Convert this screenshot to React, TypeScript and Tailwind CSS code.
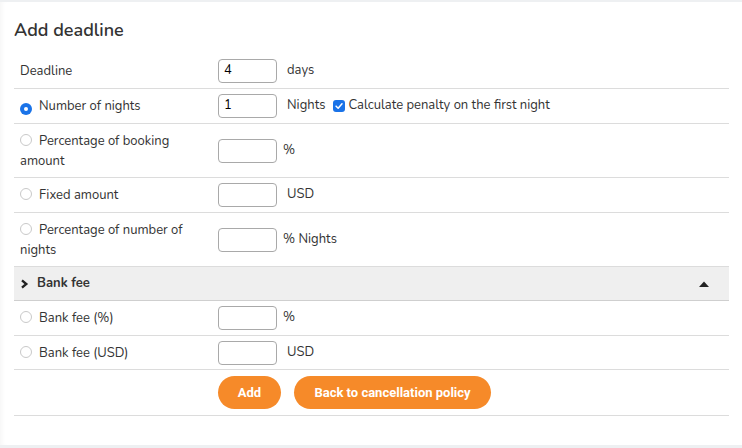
import React from "react";

type Row = {
  label: React.ReactNode;
  radio?: "on" | "off";
  value?: string;
  unit: string;
  unitGap: string;
  extra?: boolean;
  tall?: boolean;
};

function Radio({ on }: { on?: boolean }) {
  if (on) {
    return (
      <span className="mr-[7px] inline-flex h-[12px] w-[12px] translate-y-[1px] items-center justify-center rounded-full bg-[#1a73e8]">
        <span className="h-[4px] w-[4px] rounded-full bg-white" />
      </span>
    );
  }
  return <span className="mr-[7px] inline-block h-[12px] w-[12px] translate-y-[1px] rounded-full border border-[#c9c9c9] bg-white" />;
}

function Field({ value }: { value?: string }) {
  return (
    <div className="flex h-[24px] w-[59px] items-center rounded-[4px] border border-[#a9a9a9] bg-white pl-[5px] text-[13px] text-black">
      {value}
    </div>
  );
}

const rows: Row[] = [
  { label: "Deadline", value: "4", unit: "days", unitGap: "ml-[10px]" },
  { label: "Number of nights", radio: "on", value: "1", unit: "Nights", unitGap: "ml-[10px]", extra: true },
  {
    label: (
      <>
        Percentage of booking
        <br />
        amount
      </>
    ),
    radio: "off",
    unit: "%",
    unitGap: "ml-[6px]",
    tall: true,
  },
  { label: "Fixed amount", radio: "off", unit: "USD", unitGap: "ml-[10px]" },
  {
    label: (
      <>
        Percentage of number of
        <br />
        nights
      </>
    ),
    radio: "off",
    unit: "% Nights",
    unitGap: "ml-[6px]",
    tall: true,
  },
];

const bankRows: Row[] = [
  { label: "Bank fee (%)", radio: "off", unit: "%", unitGap: "ml-[6px]" },
  { label: "Bank fee (USD)", radio: "off", unit: "USD", unitGap: "ml-[10px]", tall: true },
];

function FormRow({ row }: { row: Row }) {
  return (
    <div className="flex items-center border-b border-[#dcdcdc]">
      <div className={row.tall ? "w-[194px] px-[6px] pt-[7px] pb-[6px] leading-[20px]" : "w-[194px] px-[6px] py-[7px] leading-[20px]"}>
        {row.radio && <Radio on={row.radio === "on"} />}
        {row.label}
      </div>
      <div className="flex items-center pl-[10px]">
        <Field value={row.value} />
        <span className={row.unitGap}>{row.unit}</span>
        {row.extra && (
          <span className="ml-[8px] flex items-center">
            <span className="mr-[3px] flex h-[12px] w-[12px] items-center justify-center rounded-[3px] bg-[#1a73e8]">
              <svg viewBox="0 0 12 12" className="h-[10px] w-[10px]">
                <path d="M2.5 6.2 L5 8.6 L9.6 3.4" fill="none" stroke="white" strokeWidth="1.8" strokeLinecap="round" strokeLinejoin="round" />
              </svg>
            </span>
            Calculate penalty on the first night
          </span>
        )}
      </div>
    </div>
  );
}

export default function App() {
  return (
    <div className="h-[448px] w-[742px] overflow-hidden bg-[#eef0f2] pt-[2px] font-['Nunito','Lato',sans-serif] text-[13px] text-[#333]">
      <div className="h-[443px] bg-white px-[14px] pr-[13px] shadow-[inset_5px_0_5px_-3px_rgba(0,0,0,0.04)]">
        <h2 className="pt-[16px] text-[18px] font-semibold leading-[24px] text-[#333]">Add deadline</h2>
        <div className="mt-[12px]">
          {rows.map((r, i) => (
            <FormRow key={i} row={r} />
          ))}
          <div className="flex items-center justify-between border-b border-[#cfcfcf] bg-[#efefef] px-[6px] py-[7px] leading-[19px]">
            <span className="flex items-center font-bold">
              <svg viewBox="0 0 10 10" className="mr-[8px] h-[10px] w-[9px]">
                <path d="M2.2 1 L7 5 L2.2 9" fill="none" stroke="#222" strokeWidth="2.6" />
              </svg>
              Bank fee
            </span>
            <svg viewBox="0 0 10 6" className="mr-[14px] h-[6px] w-[10px]">
              <path d="M0 6 L5 0.5 L10 6 Z" fill="#222" />
            </svg>
          </div>
          {bankRows.map((r, i) => (
            <FormRow key={i} row={r} />
          ))}
          <div className="flex items-center gap-[13px] border-b border-[#dcdcdc] pt-[6px] pb-[6px] pl-[204px]">
            <button className="h-[33px] w-[63px] rounded-full bg-[#f68a29] font-['Roboto',sans-serif] text-[13px] font-bold text-white">
              Add
            </button>
            <button className="h-[33px] w-[197px] rounded-full bg-[#f68a29] font-['Roboto',sans-serif] text-[13px] font-bold text-white">
              Back to cancellation policy
            </button>
          </div>
        </div>
      </div>
    </div>
  );
}
